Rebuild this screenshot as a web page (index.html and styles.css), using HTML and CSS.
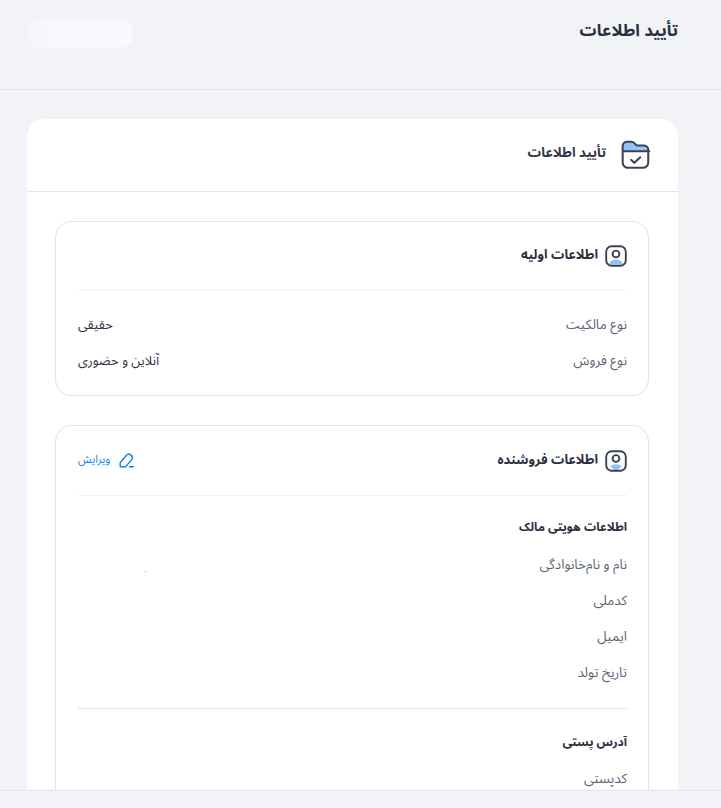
FILE: index.html
```html
<!DOCTYPE html>
<html lang="fa" dir="rtl">
<head>
<meta charset="utf-8">
<title>تأیید اطلاعات</title>
<link rel="stylesheet" href="styles.css">
</head>
<body>
<div class="app">
  <header class="topbar">
    <h1 class="page-title">تأیید اطلاعات</h1>
    <div class="skeleton"></div>
  </header>
  <main class="content">
    <section class="card">
      <div class="card-head">
        <svg class="icon-folder" viewBox="0 0 30 30" aria-hidden="true">
          <path class="fill-blue" d="M2.500 11.500V6.500a4 4 0 0 1 4-4h4.200c1.200 0 2 .5 2.800 1.400l1 1.200c.5.6 1.100.9 1.900.9h6.100a4 4 0 0 1 4 4v1.500z"/>
          <path class="line" d="M2.500 11.500V6.500a4 4 0 0 1 4-4h4.200c1.200 0 2 .5 2.800 1.400l1 1.200c.5.6 1.100.9 1.900.9h6.100a4 4 0 0 1 4 4v12a5 5 0 0 1-5 5H7.500a5 5 0 0 1-5-5zM2.500 11.500h25"/>
          <path class="line" d="M10.500 19.600l3 2.700 5.500-5.200"/>
        </svg>
        <h2 class="card-title">تأیید اطلاعات</h2>
      </div>
      <div class="card-body">
        <section class="panel">
          <div class="panel-head">
            <div class="panel-title-wrap">
              <svg class="icon-user" viewBox="0 0 22 22" aria-hidden="true">
                <path class="fill-blue" d="M4.200 19.600c.4-3 3-5 6.800-5s6.400 2 6.800 5z"/>
                <rect class="line" x="1.200" y="1.200" width="19.600" height="19.600" rx="5.500"/>
                <circle class="line" cx="11" cy="9" r="3.400"/>
              </svg>
              <h3 class="panel-title">اطلاعات اولیه</h3>
            </div>
          </div>
          <div class="rows rows-first">
            <div class="row"><span class="label">نوع مالکیت</span><span class="value">حقیقی</span></div>
            <div class="row"><span class="label">نوع فروش</span><span class="value">آنلاین و حضوری</span></div>
          </div>
        </section>
        <section class="panel">
          <div class="panel-head panel-head-edit">
            <div class="panel-title-wrap">
              <svg class="icon-user" viewBox="0 0 22 22" aria-hidden="true">
                <path class="fill-blue" d="M5 16.500c1.500-1.600 3.500-2.300 6-2.300s4.500.7 6 2.300l-6 4.300z"/>
                <rect class="line" x="1.200" y="1.200" width="19.600" height="19.600" rx="5.500"/>
                <circle class="line" cx="11" cy="8.500" r="3.400"/>
              </svg>
              <h3 class="panel-title">اطلاعات فروشنده</h3>
            </div>
            <a class="edit" href="#">
              <svg class="icon-edit" viewBox="0 0 16 16" aria-hidden="true">
                <path d="M1.200 14.700V10.800L7.500 3.300a3 3 0 0 1 4.200-.4l.6.5a3 3 0 0 1 .4 4.200L6.500 14.700zM10.500 14.700h3.800"/>
              </svg>
              <span>ویرایش</span>
            </a>
          </div>
          <h4 class="group-title">اطلاعات هویتی مالک</h4>
          <div class="rows">
            <div class="row"><span class="label">نام و نام‌خانوادگی</span><span class="dot"></span></div>
            <div class="row"><span class="label">کدملی</span></div>
            <div class="row"><span class="label">ایمیل</span></div>
            <div class="row"><span class="label">تاریخ تولد</span></div>
          </div>
          <hr class="divider">
          <h4 class="group-title group-title-next">آدرس پستی</h4>
          <div class="rows rows-last">
            <div class="row"><span class="label">کدپستی</span></div>
          </div>
        </section>
      </div>
    </section>
  </main>
  <footer class="bottombar"></footer>
</div>
</body>
</html>
```
FILE: styles.css
```css
* { box-sizing: border-box; }
html, body { margin: 0; height: 100%; }
body {
  background: #f1f3f7;
  color: #2b3040;
  font-family: "Noto Sans Arabic", Inter, sans-serif;
  overflow: hidden;
}
.app { display: flex; flex-direction: column; height: 100vh; }
.topbar {
  flex: 0 0 90px;
  padding: 18px 43px 0 27px;
  border-bottom: 1px solid #dfe1e7;
  position: relative;
}
.page-title { margin: 0; font-size: 16.800px; line-height: 26px; font-weight: 700; color: #2b3040; }
.skeleton {
  position: absolute;
  left: 27px;
  top: 19px;
  width: 106px;
  height: 29px;
  border-radius: 14px;
  background: linear-gradient(90deg, #f4f5f9, #f7f9fc 25%, #f7f9fd);
}
.content { flex: 1; min-height: 0; overflow: hidden; padding: 29px 43px 0 27px; }
.card { background: #fff; border-radius: 18px 18px 0 0; }
.card-head {
  height: 73px;
  display: flex;
  align-items: center;
  gap: 14px;
  padding: 0 26px 4px;
  border-bottom: 1px solid #e4e5ea;
}
.icon-folder { width: 32px; height: 32px; margin-top: 3px; }
.card-title { margin: 0; font-size: 13.400px; font-weight: 700; color: #333848; }
.card-body { padding: 29px 29px 0 28px; display: flex; flex-direction: column; gap: 29px; }
.panel { border: 1px solid #e1e2ea; border-radius: 16px; padding: 0 21px 0 22px; }
.panel-head {
  height: 69px;
  display: flex;
  align-items: center;
  justify-content: space-between;
  border-bottom: 1px solid #f1f2f5;
}
.panel-head-edit { height: 70px; }
.panel-title-wrap { display: flex; align-items: center; gap: 7px; }
.icon-user { width: 22px; height: 22px; }
.panel-title { margin: 0 0 2px; font-size: 13.100px; font-weight: 700; color: #2b3040; }
.line { fill: none; stroke: #3a4155; stroke-width: 1.900; stroke-linecap: round; stroke-linejoin: round; }
.fill-blue { fill: #93c2f6; }
.edit { display: flex; align-items: center; gap: 9px; margin-bottom: 2px; color: #1482f0; text-decoration: none; font-size: 11px; }
.icon-edit { width: 16px; height: 16px; fill: none; stroke: #1482f0; stroke-width: 1.400; stroke-linecap: round; stroke-linejoin: round; }
.group-title { margin: 22px 0 0; font-size: 12px; line-height: 20px; font-weight: 700; color: #2b3040; }
.group-title-next { margin-top: 24px; }
.rows { padding: 9px 0 17px; }
.rows-first { padding: 16px 0; }
.rows-last { padding-top: 8px; }
.row { height: 36px; display: flex; justify-content: space-between; align-items: center; font-size: 13.400px; position: relative; }
.label { color: #5f6576; }
.value { color: #2f3443; font-size: 13px; }
.dot { width: 1px; height: 1px; background: #9aa0ac; position: absolute; left: 67px; top: 24px; }
.divider { border: 0; border-top: 1px solid #e1e2e8; margin: 0; }
.bottombar { flex: 0 0 18px; background: #f1f3f7; border-top: 1px solid #e3e5ea; }
```
